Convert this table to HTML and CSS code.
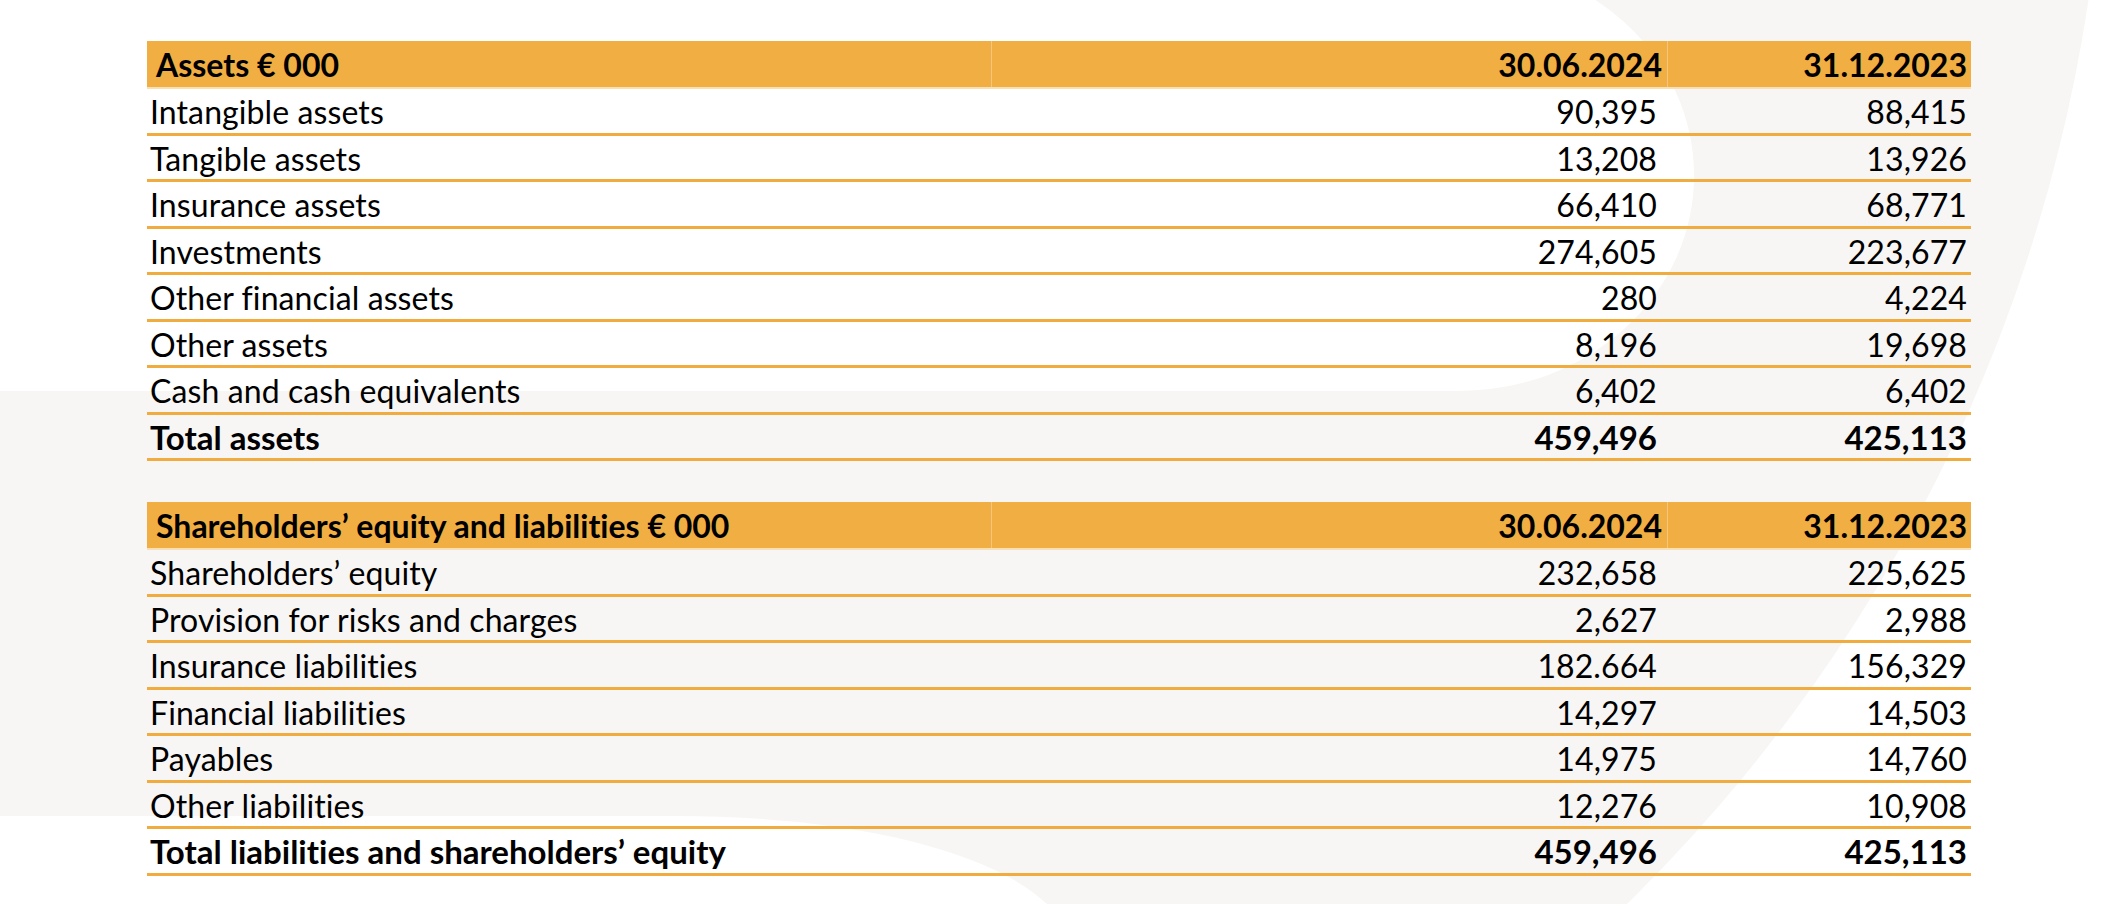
FILE: index.html
```html
<!DOCTYPE html>
<html lang="en">
<head>
<meta charset="utf-8">
<title>Balance sheet</title>
<link rel="stylesheet" href="styles.css">
</head>
<body>
<div class="page">
  <svg class="bg" width="2118" height="904" viewBox="0 0 2118 904" aria-hidden="true">
    <rect x="0" y="0" width="2118" height="904" fill="#ffffff"/>
    <circle cx="510" cy="-236" r="1596" fill="#f7f6f4"/>
    <rect x="-400" y="-40" width="2094" height="431" rx="235" ry="215" fill="#ffffff"/>
    <path d="M-10 816 H675 C850 816 990 850 1047 904 V914 H-10 Z" fill="#ffffff"/>
  </svg>

  <div class="content">
    <section class="sheet">
      <div class="row head">
        <div class="cell label">Assets € 000</div>
        <div class="cell num a">30.06.2024</div>
        <div class="cell num b">31.12.2023</div>
      </div>
      <div class="row"><div class="cell label">Intangible assets</div><div class="cell num a">90,395</div><div class="cell num b">88,415</div></div>
      <div class="row"><div class="cell label">Tangible assets</div><div class="cell num a">13,208</div><div class="cell num b">13,926</div></div>
      <div class="row"><div class="cell label">Insurance assets</div><div class="cell num a">66,410</div><div class="cell num b">68,771</div></div>
      <div class="row"><div class="cell label">Investments</div><div class="cell num a">274,605</div><div class="cell num b">223,677</div></div>
      <div class="row"><div class="cell label">Other financial assets</div><div class="cell num a">280</div><div class="cell num b">4,224</div></div>
      <div class="row"><div class="cell label">Other assets</div><div class="cell num a">8,196</div><div class="cell num b">19,698</div></div>
      <div class="row"><div class="cell label">Cash and cash equivalents</div><div class="cell num a">6,402</div><div class="cell num b">6,402</div></div>
      <div class="row total"><div class="cell label">Total assets</div><div class="cell num a">459,496</div><div class="cell num b">425,113</div></div>
    </section>

    <section class="sheet second">
      <div class="row head">
        <div class="cell label">Shareholders’ equity and liabilities € 000</div>
        <div class="cell num a">30.06.2024</div>
        <div class="cell num b">31.12.2023</div>
      </div>
      <div class="row"><div class="cell label">Shareholders’ equity</div><div class="cell num a">232,658</div><div class="cell num b">225,625</div></div>
      <div class="row"><div class="cell label">Provision for risks and charges</div><div class="cell num a">2,627</div><div class="cell num b">2,988</div></div>
      <div class="row"><div class="cell label">Insurance liabilities</div><div class="cell num a">182.664</div><div class="cell num b">156,329</div></div>
      <div class="row"><div class="cell label">Financial liabilities</div><div class="cell num a">14,297</div><div class="cell num b">14,503</div></div>
      <div class="row"><div class="cell label">Payables</div><div class="cell num a">14,975</div><div class="cell num b">14,760</div></div>
      <div class="row"><div class="cell label">Other liabilities</div><div class="cell num a">12,276</div><div class="cell num b">10,908</div></div>
      <div class="row total"><div class="cell label">Total liabilities and shareholders’ equity</div><div class="cell num a">459,496</div><div class="cell num b">425,113</div></div>
    </section>
  </div>
</div>
</body>
</html>
```

FILE: styles.css
```css
html, body {
  margin: 0;
  padding: 0;
}

body {
  width: 2118px;
  height: 904px;
  overflow: hidden;
  background: #f7f6f4;
  font-family: Lato, "Open Sans", "Liberation Sans", sans-serif;
  font-variant-ligatures: none;
  color: #000;
}

.page {
  position: relative;
  width: 2118px;
  height: 904px;
}

.bg {
  position: absolute;
  left: 0;
  top: 0;
  z-index: 0;
}

.content {
  position: relative;
  z-index: 1;
  padding: 41px 0 0 147px;
  display: flex;
  flex-direction: column;
  gap: 41px;
}

.sheet {
  width: 1824px;
  display: flex;
  flex-direction: column;
}

.row {
  display: grid;
  grid-template-columns: 844px 676px 304px;
  height: 46.5px;
  box-sizing: border-box;
  border-bottom: 3px solid #f0ac3f;
  font-size: 32px;
  letter-spacing: 0.1px;
  line-height: 41.5px;
}

.row .cell {
  padding-top: 2px;
}

.row.head {
  height: 48px;
  background: #f1ae42;
  border-bottom: 2px solid #f8dfb4;
  font-weight: 700;
  font-size: 32px;
  letter-spacing: 0;
  line-height: 44px;
}

.row.head .cell.label {
  padding-left: 9px;
}

.row.head .cell.a,
.row.head .cell.b {
  border-left: 1px solid rgba(255, 255, 255, 0.3);
}

.row.head .cell.a {
  padding-right: 5px;
}

.row.total {
  font-weight: 700;
  font-size: 33px;
  letter-spacing: 0;
}

.cell {
  white-space: nowrap;
  box-sizing: border-box;
}

.cell.label {
  padding-left: 3px;
}

.cell.num {
  text-align: right;
}

.cell.a {
  padding-right: 10px;
}

.cell.b {
  padding-right: 4px;
}
```
